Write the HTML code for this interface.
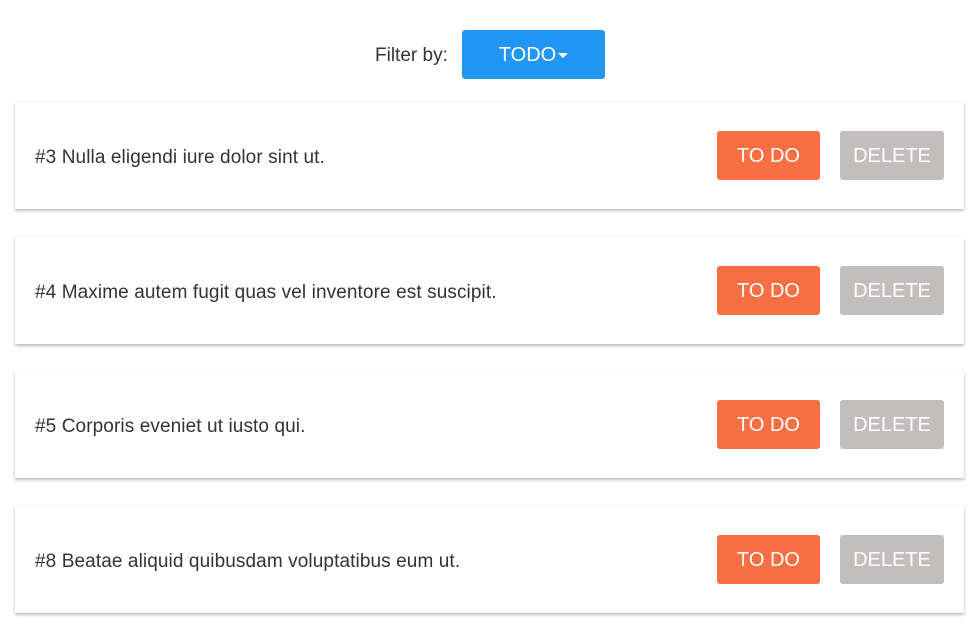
<!DOCTYPE html>
<html><head><style>
body{margin:0;background:#fff;font-family:"Liberation Sans",Arial,sans-serif;width:979px;height:637px;position:relative;overflow:hidden}
.f{position:absolute;left:375px;top:45px;font-size:19px;color:#333}
.fb{position:absolute;left:462px;top:30px;width:143px;height:49px;background:#2196f3;border-radius:3px;color:#fff;font-size:20px;line-height:51px;text-align:center}
.car{display:inline-block;width:0;height:0;border-left:5px solid transparent;border-right:5px solid transparent;border-top:5px solid #fff;vertical-align:middle;margin-left:2px}
.c{position:absolute;left:15px;width:949px;height:107px;background:#fff;box-shadow:0 2px 3px rgba(0,0,0,.25),0 0 1px rgba(0,0,0,.12)}
.t{position:absolute;left:20px;top:45px;font-size:19px;letter-spacing:0.1px;color:#333}
.b{position:absolute;top:29px;height:49px;width:103px;border-radius:3px;color:#fff;font-size:20px;line-height:51px;text-align:center}
.o{left:702px;background:#f76f42}
.d{left:825px;width:104px;background:#c2bebd}
</style></head><body>
<div class="f">Filter by:</div>
<div class="fb">TODO<span class="car"></span></div>
<div class="c" style="top:102px"><div class="t">#3 Nulla eligendi iure dolor sint ut.</div><div class="b o">TO DO</div><div class="b d">DELETE</div></div>
<div class="c" style="top:237px"><div class="t">#4 Maxime autem fugit quas vel inventore est suscipit.</div><div class="b o">TO DO</div><div class="b d">DELETE</div></div>
<div class="c" style="top:371px"><div class="t">#5 Corporis eveniet ut iusto qui.</div><div class="b o">TO DO</div><div class="b d">DELETE</div></div>
<div class="c" style="top:506px"><div class="t">#8 Beatae aliquid quibusdam voluptatibus eum ut.</div><div class="b o">TO DO</div><div class="b d">DELETE</div></div>
</body></html>
